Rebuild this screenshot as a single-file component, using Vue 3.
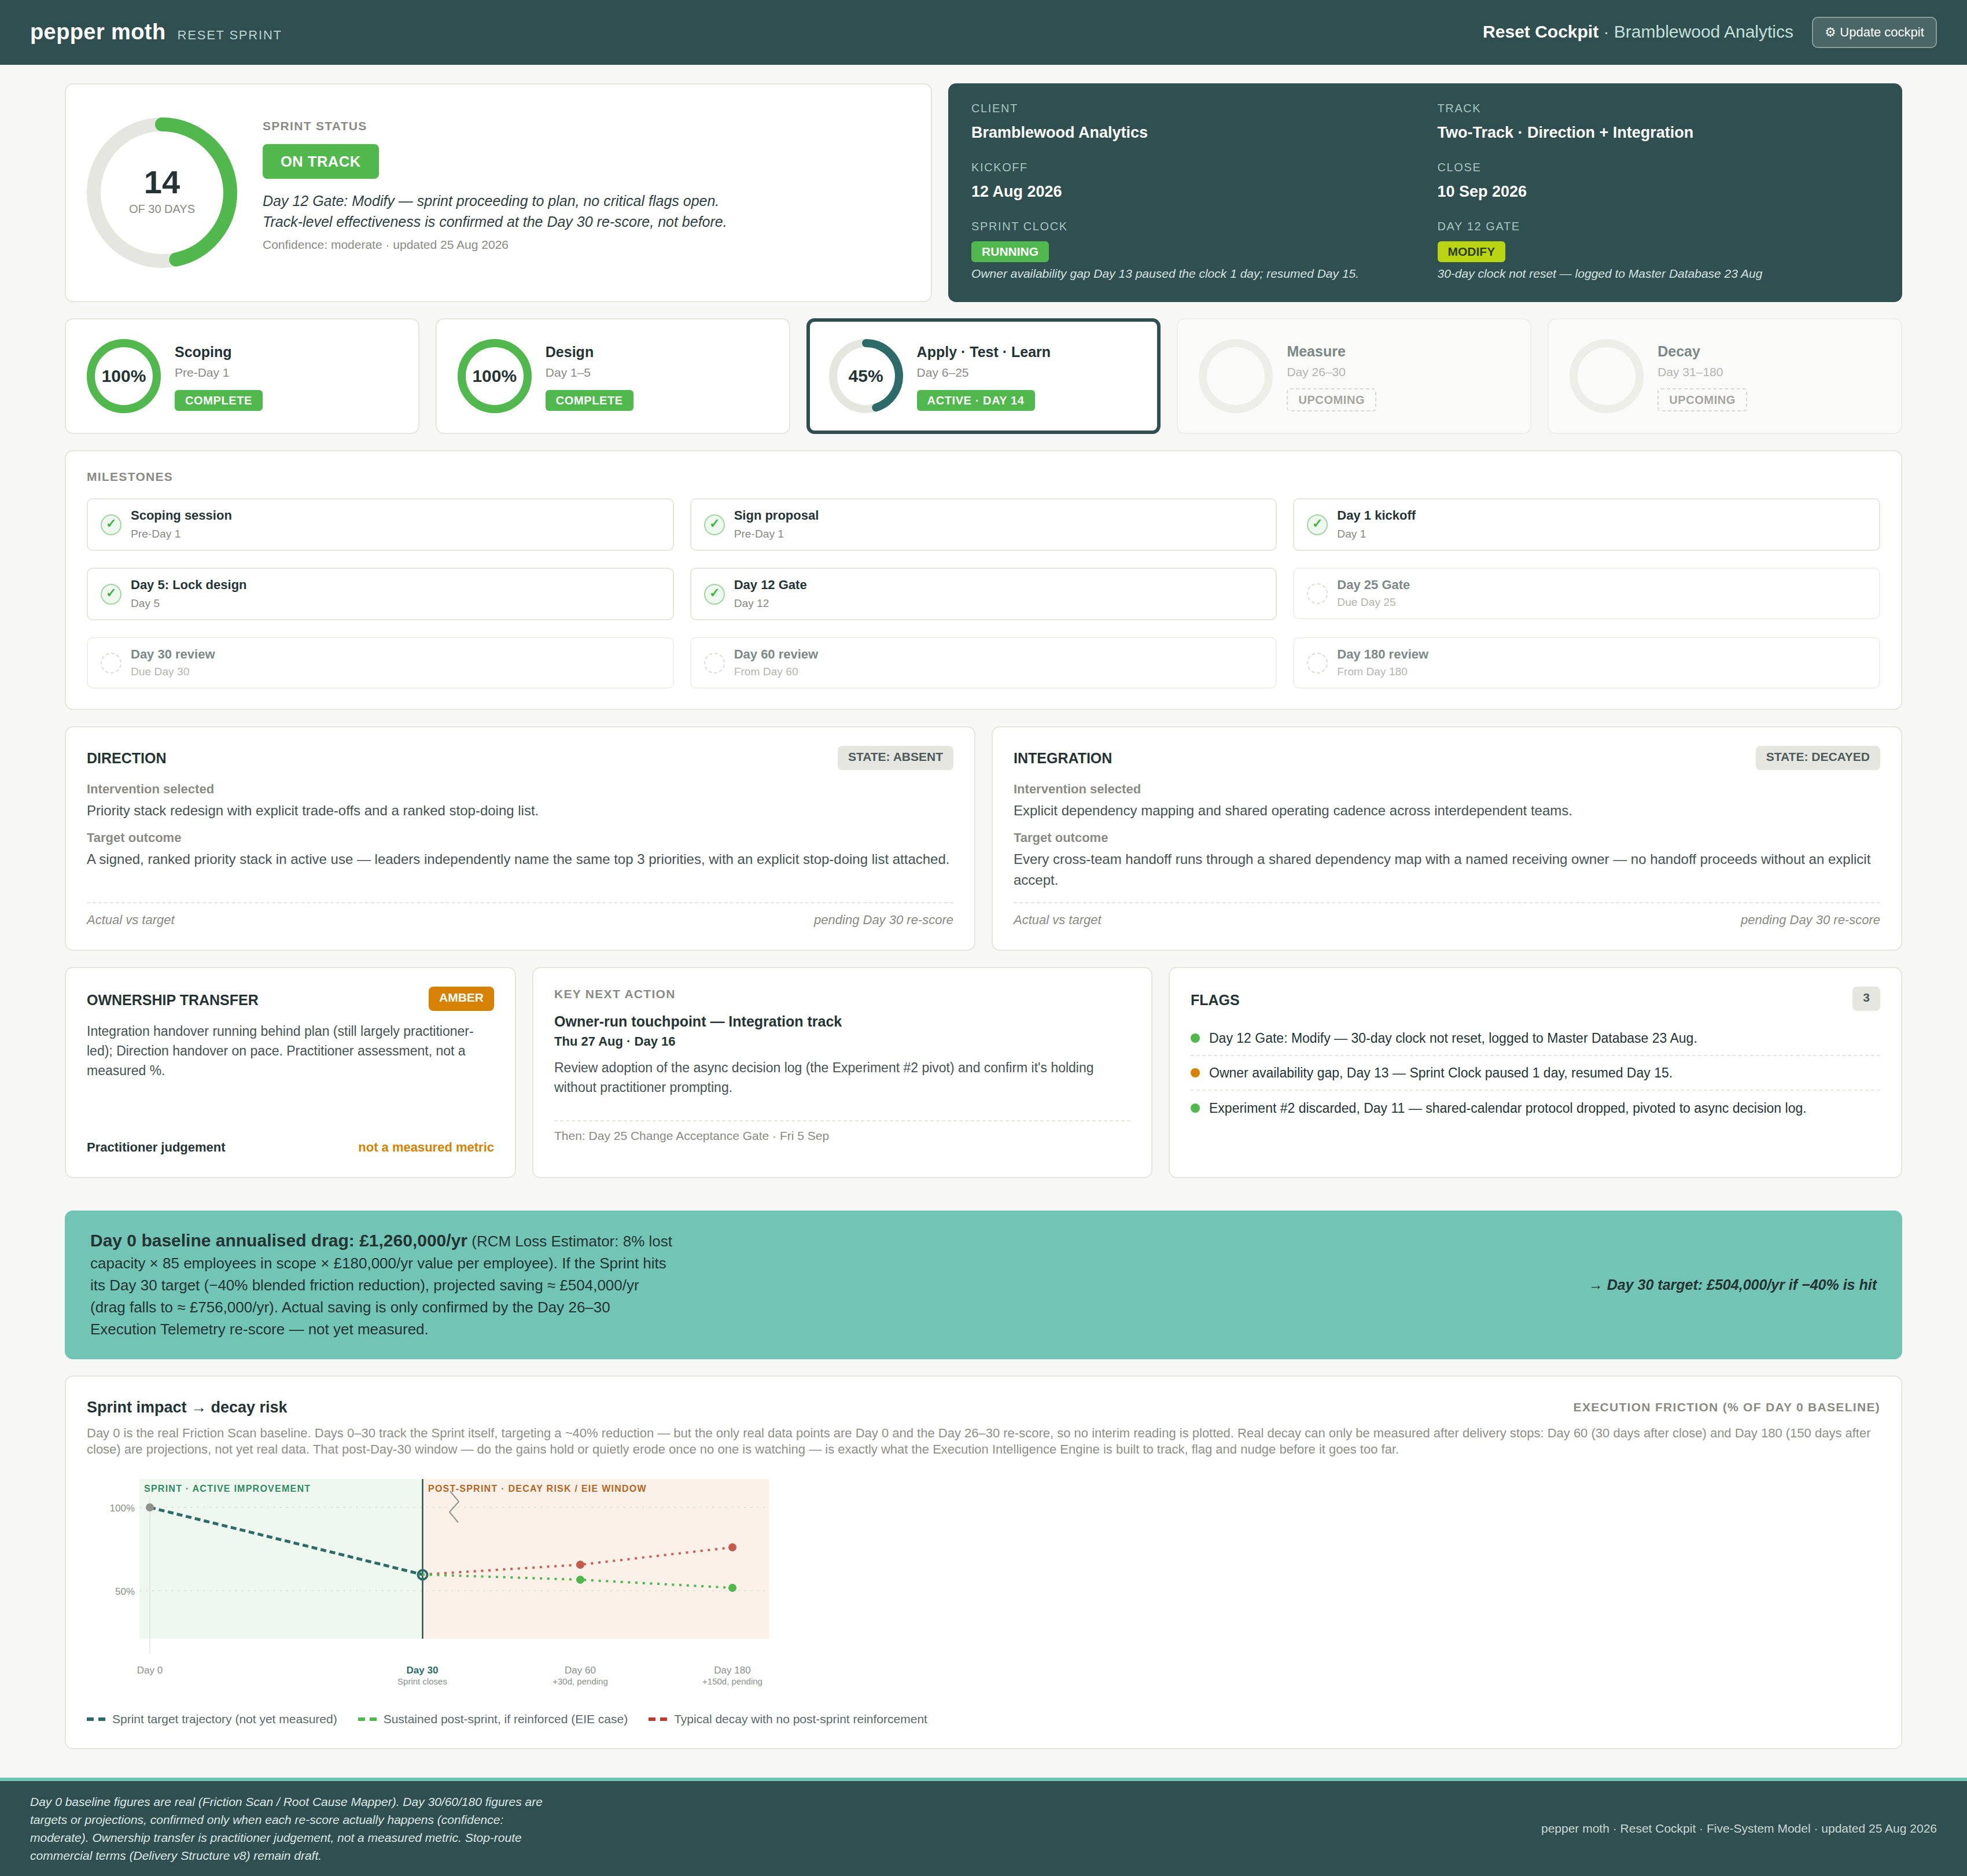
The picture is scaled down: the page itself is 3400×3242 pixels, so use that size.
<script setup>
const stages = [
  { name: "Scoping", sub: "Pre-Day 1", pct: 100, badge: "COMPLETE", state: "done" },
  { name: "Design", sub: "Day 1–5", pct: 100, badge: "COMPLETE", state: "done" },
  { name: "Apply · Test · Learn", sub: "Day 6–25", pct: 45, badge: "ACTIVE · DAY 14", state: "active" },
  { name: "Measure", sub: "Day 26–30", pct: 0, badge: "UPCOMING", state: "upcoming" },
  { name: "Decay", sub: "Day 31–180", pct: 0, badge: "UPCOMING", state: "upcoming" },
];

const milestones = [
  { name: "Scoping session", sub: "Pre-Day 1", done: true },
  { name: "Sign proposal", sub: "Pre-Day 1", done: true },
  { name: "Day 1 kickoff", sub: "Day 1", done: true },
  { name: "Day 5: Lock design", sub: "Day 5", done: true },
  { name: "Day 12 Gate", sub: "Day 12", done: true },
  { name: "Day 25 Gate", sub: "Due Day 25", done: false },
  { name: "Day 30 review", sub: "Due Day 30", done: false },
  { name: "Day 60 review", sub: "From Day 60", done: false },
  { name: "Day 180 review", sub: "From Day 180", done: false },
];

const tracks = [
  {
    name: "DIRECTION",
    state: "STATE: ABSENT",
    intervention: "Priority stack redesign with explicit trade-offs and a ranked stop-doing list.",
    outcome: "A signed, ranked priority stack in active use — leaders independently name the same top 3 priorities, with an explicit stop-doing list attached.",
  },
  {
    name: "INTEGRATION",
    state: "STATE: DECAYED",
    intervention: "Explicit dependency mapping and shared operating cadence across interdependent teams.",
    outcome: "Every cross-team handoff runs through a shared dependency map with a named receiving owner — no handoff proceeds without an explicit accept.",
  },
];

const flags = [
  { text: "Day 12 Gate: Modify — 30-day clock not reset, logged to Master Database 23 Aug.", color: "green" },
  { text: "Owner availability gap, Day 13 — Sprint Clock paused 1 day, resumed Day 15.", color: "amber" },
  { text: "Experiment #2 discarded, Day 11 — shared-calendar protocol dropped, pivoted to async decision log.", color: "green" },
];

const legend = [
  { label: "Sprint target trajectory (not yet measured)", color: "teal" },
  { label: "Sustained post-sprint, if reinforced (EIE case)", color: "green" },
  { label: "Typical decay with no post-sprint reinforcement", color: "red" },
];

const bigCirc = 2 * Math.PI * 118;
const smallCirc = 2 * Math.PI * 57;
const dash = (pct) => `${(pct / 100) * smallCirc} ${smallCirc}`;
</script>

<template>
  <div class="page">
    <header class="topbar">
      <div class="brand">
        <span class="logo">pepper moth</span>
        <span class="product">RESET SPRINT</span>
      </div>
      <div class="top-right">
        <div class="top-title"><b>Reset Cockpit</b> <i>·</i> <span>Bramblewood Analytics</span></div>
        <button class="update-btn">⚙ Update cockpit</button>
      </div>
    </header>

    <main class="content">
      <section class="hero">
        <div class="card status-card">
          <div class="big-ring">
            <svg width="260" height="260" viewBox="0 0 260 260">
              <circle cx="130" cy="130" r="118" fill="none" stroke="#e6e6e1" stroke-width="24" />
              <circle cx="130" cy="130" r="118" fill="none" stroke="#50b84c" stroke-width="24" stroke-linecap="round"
                :stroke-dasharray="`${(14 / 30) * bigCirc} ${bigCirc}`" transform="rotate(-90 130 130)" />
            </svg>
            <div class="big-ring-label">
              <div class="big-num">14</div>
              <div class="big-sub">OF 30 DAYS</div>
            </div>
          </div>
          <div class="status-body">
            <div class="eyebrow">SPRINT STATUS</div>
            <div class="on-track">ON TRACK</div>
            <p class="status-text">Day 12 Gate: Modify — sprint proceeding to plan, no critical flags open.<br>Track-level effectiveness is confirmed at the Day 30 re-score, not before.</p>
            <div class="status-meta">Confidence: moderate · updated 25 Aug 2026</div>
          </div>
        </div>

        <div class="info-panel">
          <div class="info-cell">
            <div class="info-label">CLIENT</div>
            <div class="info-value">Bramblewood Analytics</div>
          </div>
          <div class="info-cell">
            <div class="info-label">TRACK</div>
            <div class="info-value">Two-Track · Direction + Integration</div>
          </div>
          <div class="info-cell">
            <div class="info-label">KICKOFF</div>
            <div class="info-value">12 Aug 2026</div>
          </div>
          <div class="info-cell">
            <div class="info-label">CLOSE</div>
            <div class="info-value">10 Sep 2026</div>
          </div>
          <div class="info-cell">
            <div class="info-label">SPRINT CLOCK</div>
            <span class="info-pill running">RUNNING</span>
            <div class="info-note">Owner availability gap Day 13 paused the clock 1 day; resumed Day 15.</div>
          </div>
          <div class="info-cell">
            <div class="info-label">DAY 12 GATE</div>
            <span class="info-pill modify">MODIFY</span>
            <div class="info-note">30-day clock not reset — logged to Master Database 23 Aug</div>
          </div>
        </div>
      </section>

      <section class="stages">
        <div v-for="s in stages" :key="s.name" class="stage" :class="s.state">
          <div class="stage-ring">
            <svg width="128" height="128" viewBox="0 0 128 128">
              <circle cx="64" cy="64" r="57" fill="none" stroke="#e6e6e1" stroke-width="14" />
              <circle v-if="s.pct > 0" cx="64" cy="64" r="57" fill="none" :stroke="s.state === 'active' ? '#2d6b68' : '#50b84c'"
                stroke-width="14" stroke-linecap="round" :stroke-dasharray="dash(s.pct)" transform="rotate(-90 64 64)" />
            </svg>
            <span v-if="s.pct > 0" class="stage-pct">{{ s.pct }}%</span>
          </div>
          <div class="stage-body">
            <div class="stage-name">{{ s.name }}</div>
            <div class="stage-sub">{{ s.sub }}</div>
            <span class="stage-badge">{{ s.badge }}</span>
          </div>
        </div>
      </section>

      <section class="card milestones">
        <div class="eyebrow">MILESTONES</div>
        <div class="ms-grid">
          <div v-for="m in milestones" :key="m.name" class="ms" :class="{ todo: !m.done }">
            <span class="ms-icon"><template v-if="m.done">✓</template></span>
            <div>
              <div class="ms-name">{{ m.name }}</div>
              <div class="ms-sub">{{ m.sub }}</div>
            </div>
          </div>
        </div>
      </section>

      <section class="tracks">
        <div v-for="t in tracks" :key="t.name" class="card track">
          <div class="card-head">
            <h3>{{ t.name }}</h3>
            <span class="grey-pill">{{ t.state }}</span>
          </div>
          <div class="field-label">Intervention selected</div>
          <p class="field-text">{{ t.intervention }}</p>
          <div class="field-label second">Target outcome</div>
          <p class="field-text outcome">{{ t.outcome }}</p>
          <div class="track-foot">
            <span>Actual vs target</span>
            <span>pending Day 30 re-score</span>
          </div>
        </div>
      </section>

      <section class="lower">
        <div class="card owner">
          <div class="card-head">
            <h3>OWNERSHIP TRANSFER</h3>
            <span class="amber-pill">AMBER</span>
          </div>
          <p class="body-text">Integration handover running behind plan (still largely practitioner-led); Direction handover on pace. Practitioner assessment, not a measured %.</p>
          <div class="owner-foot">
            <b>Practitioner judgement</b>
            <b class="amber-text">not a measured metric</b>
          </div>
        </div>

        <div class="card next">
          <div class="eyebrow">KEY NEXT ACTION</div>
          <div class="next-title">Owner-run touchpoint — Integration track</div>
          <div class="next-date">Thu 27 Aug · Day 16</div>
          <p class="body-text">Review adoption of the async decision log (the Experiment #2 pivot) and confirm it's holding without practitioner prompting.</p>
          <div class="next-then">Then: Day 25 Change Acceptance Gate · Fri 5 Sep</div>
        </div>

        <div class="card flags">
          <div class="card-head">
            <h3>FLAGS</h3>
            <span class="grey-pill count">3</span>
          </div>
          <div v-for="f in flags" :key="f.text" class="flag">
            <span class="flag-dot" :class="f.color"></span>
            <span>{{ f.text }}</span>
          </div>
        </div>
      </section>

      <section class="banner">
        <p class="banner-text"><b>Day 0 baseline annualised drag: £1,260,000/yr</b> (RCM Loss Estimator: 8% lost capacity × 85 employees in scope × £180,000/yr value per employee). If the Sprint hits its Day 30 target (−40% blended friction reduction), projected saving ≈ £504,000/yr (drag falls to ≈ £756,000/yr). Actual saving is only confirmed by the Day 26–30 Execution Telemetry re-score — not yet measured.</p>
        <div class="banner-target">→ Day 30 target: £504,000/yr if −40% is hit</div>
      </section>

      <section class="card impact">
        <div class="impact-head">
          <h3>Sprint impact → decay risk</h3>
          <span class="eyebrow">EXECUTION FRICTION (% OF DAY 0 BASELINE)</span>
        </div>
        <p class="impact-desc">Day 0 is the real Friction Scan baseline. Days 0–30 track the Sprint itself, targeting a ~40% reduction — but the only real data points are Day 0 and the Day 26–30 re-score, so no interim reading is plotted. Real decay can only be measured after delivery stops: Day 60 (30 days after close) and Day 180 (150 days after close) are projections, not yet real data. That post-Day-30 window — do the gains hold or quietly erode once no one is watching — is exactly what the Execution Intelligence Engine is built to track, flag and nudge before it goes too far.</p>

        <svg class="chart" width="1200" height="386" viewBox="0 0 1200 386">
          <rect x="91" y="16" width="489" height="276" fill="#eef8ef" />
          <rect x="580" y="16" width="599" height="276" fill="#fbf1e8" />
          <line x1="91" y1="65" x2="1179" y2="65" stroke="#e4e4de" stroke-width="2" stroke-dasharray="4 7" />
          <line x1="91" y1="209" x2="1179" y2="209" stroke="#e4e4de" stroke-width="2" stroke-dasharray="4 7" />
          <line x1="109" y1="46" x2="109" y2="318" stroke="#d8dad5" stroke-width="1" />
          <line x1="580.5" y1="16" x2="580.5" y2="292" stroke="#2f4f50" stroke-width="2.5" />

          <text x="99" y="38" class="zone zone-a">SPRINT · ACTIVE IMPROVEMENT</text>
          <text x="590" y="38" class="zone zone-b">POST-SPRINT · DECAY RISK / EIE WINDOW</text>
          <polyline points="628,37 643,55 627,73 642,91" fill="none" stroke="#8e958f" stroke-width="2" />

          <text x="83" y="72" class="axis" text-anchor="end">100%</text>
          <text x="83" y="216" class="axis" text-anchor="end">50%</text>

          <line x1="109" y1="65" x2="580" y2="181" stroke="#2d6b68" stroke-width="5" stroke-dasharray="10 6" />
          <polyline points="580,181 853,164 1116,134" fill="none" stroke="#c0392b" stroke-opacity=".8" stroke-width="4" stroke-dasharray="4 8.7" />
          <polyline points="580,181 853,190 1116,204" fill="none" stroke="#50b84c" stroke-width="4" stroke-dasharray="4 8.7" />

          <circle cx="109" cy="65" r="7" fill="#8e918c" />
          <circle cx="580.5" cy="181.5" r="8" fill="none" stroke="#2d6b68" stroke-width="4" />
          <circle cx="853" cy="164" r="7" fill="#c85a4c" />
          <circle cx="853" cy="190" r="7" fill="#50b84c" />
          <circle cx="1116" cy="134" r="7" fill="#c85a4c" />
          <circle cx="1116" cy="204" r="7" fill="#50b84c" />

          <text x="109" y="352" class="axis" text-anchor="middle">Day 0</text>
          <text x="580" y="352" class="axis strong" text-anchor="middle">Day 30</text>
          <text x="580" y="371" class="axis small" text-anchor="middle">Sprint closes</text>
          <text x="853" y="352" class="axis" text-anchor="middle">Day 60</text>
          <text x="853" y="371" class="axis small" text-anchor="middle">+30d, pending</text>
          <text x="1116" y="352" class="axis" text-anchor="middle">Day 180</text>
          <text x="1116" y="371" class="axis small" text-anchor="middle">+150d, pending</text>
        </svg>

        <div class="legend">
          <div v-for="l in legend" :key="l.label" class="legend-item">
            <span class="swatch" :class="l.color"></span>
            <span>{{ l.label }}</span>
          </div>
        </div>
      </section>
    </main>

    <footer class="footer">
      <p class="foot-note">Day 0 baseline figures are real (Friction Scan / Root Cause Mapper). Day 30/60/180 figures are targets or projections, confirmed only when each re-score actually happens (confidence: moderate). Ownership transfer is practitioner judgement, not a measured metric. Stop-route commercial terms (Delivery Structure v8) remain draft.</p>
      <div class="foot-right">pepper moth · Reset Cockpit · Five-System Model · updated 25 Aug 2026</div>
    </footer>
  </div>
</template>

<style>
body {
  background: #f7f7f5;
}
</style>

<style scoped>
.page {
  font-family: "Liberation Sans", Arial, sans-serif;
  color: #243434;
  background: #f7f7f5;
  min-height: 3242px;
  display: flex;
  flex-direction: column;
}
.page * {
  box-sizing: border-box;
}
p, h3 {
  margin: 0;
}

/* top bar */
.topbar {
  height: 112px;
  background: #2f4f50;
  color: #fff;
  display: flex;
  align-items: center;
  justify-content: space-between;
  padding: 0 52px;
  flex-shrink: 0;
}
.brand {
  display: flex;
  align-items: baseline;
  gap: 20px;
  margin-bottom: 2px;
}
.logo {
  font-size: 38px;
  font-weight: 700;
  letter-spacing: .4px;
}
.product {
  font-size: 22px;
  letter-spacing: 1.8px;
  color: #b9d3cf;
}
.top-right {
  display: flex;
  align-items: center;
  gap: 32px;
}
.top-title {
  font-size: 30px;
  color: #c4e0db;
  margin-bottom: 2px;
}
.top-title b {
  color: #fff;
}
.top-title i {
  font-style: normal;
}
.update-btn {
  height: 54px;
  width: 216px;
  border: 2px solid #8a9d9d;
  border-radius: 10px;
  background: #4a6667;
  color: #fff;
  font-family: inherit;
  font-size: 22px;
  padding: 0;
}

/* main column */
.content {
  padding: 32px 112px 48px;
  display: flex;
  flex-direction: column;
  gap: 28px;
}
.card {
  background: #fff;
  border: 2px solid #e6e6e1;
  border-radius: 14px;
}
.eyebrow {
  font-size: 21px;
  line-height: 26px;
  font-weight: 700;
  letter-spacing: 1.3px;
  color: #8a8a84;
}

/* hero */
.hero {
  display: grid;
  grid-template-columns: 1fr 1.1fr;
  gap: 28px;
  height: 378px;
}
.status-card {
  display: flex;
  align-items: center;
  gap: 44px;
  padding: 0 36px;
}
.big-ring {
  position: relative;
  width: 260px;
  height: 260px;
  flex-shrink: 0;
}
.big-ring-label {
  position: absolute;
  inset: 0 0 10px;
  display: flex;
  flex-direction: column;
  align-items: center;
  justify-content: center;
}
.big-num {
  font-size: 56px;
  font-weight: 700;
  line-height: 64px;
  color: #243434;
}
.big-sub {
  font-size: 20px;
  color: #8a8a84;
  line-height: 24px;
  margin-top: 2px;
}
.status-body {
  padding-bottom: 22px;
}
.on-track {
  display: inline-block;
  margin: 18px 0 20px;
  height: 60px;
  line-height: 60px;
  padding: 0 31px;
  background: #50b84c;
  color: #fff;
  font-size: 25.5px;
  font-weight: 700;
  letter-spacing: .5px;
  border-radius: 8px;
}
.status-text {
  font-size: 25px;
  line-height: 36px;
  font-style: italic;
  color: #2f4040;
}
.status-meta {
  margin-top: 6px;
  font-size: 21px;
  line-height: 32px;
  color: #8a8a84;
}

/* info panel */
.info-panel {
  background: #2f4f50;
  border-radius: 14px;
  padding: 30px 40px;
  display: grid;
  grid-template-columns: 1fr 1fr;
  column-gap: 42px;
  align-content: start;
  row-gap: 29px;
  color: #fff;
}
.info-label {
  font-size: 20px;
  line-height: 26px;
  letter-spacing: 1.6px;
  color: #a7c6c2;
}
.info-value {
  margin-top: 11px;
  font-size: 27px;
  line-height: 36px;
  font-weight: 700;
}
.info-pill {
  display: inline-block;
  margin-top: 13px;
  height: 36px;
  line-height: 36px;
  padding: 0 18px;
  border-radius: 6px;
  font-size: 21px;
  font-weight: 700;
}
.info-pill.running {
  background: #50b84c;
  color: #fff;
}
.info-pill.modify {
  background: #b9d512;
  color: #2f3d10;
}
.info-note {
  margin-top: 5px;
  font-size: 21px;
  line-height: 30px;
  font-style: italic;
  color: #d5e3e1;
}

/* stage cards */
.stages {
  display: grid;
  grid-template-columns: repeat(5, 1fr);
  gap: 28px;
}
.stage {
  height: 200px;
  background: #fff;
  border: 2px solid #e6e6e1;
  border-radius: 14px;
  display: flex;
  align-items: center;
  gap: 24px;
  padding: 0 36px;
}
.stage.active {
  border: 6px solid #2f4f50;
  padding: 0 33px;
}
.stage.upcoming {
  background: #fafaf9;
  border-color: #eeeeea;
}
.stage-ring {
  position: relative;
  width: 128px;
  height: 128px;
  flex-shrink: 0;
}
.stage.upcoming .stage-ring {
  opacity: .6;
}
.stage-pct {
  position: absolute;
  inset: 0;
  display: flex;
  align-items: center;
  justify-content: center;
  font-size: 30px;
  font-weight: 700;
}
.stage-name {
  font-size: 25px;
  line-height: 34px;
  font-weight: 700;
}
.stage-sub {
  margin-top: 4px;
  font-size: 21px;
  line-height: 30px;
  color: #8a8a84;
}
.stage-badge {
  display: inline-block;
  margin-top: 15px;
  height: 36px;
  line-height: 36px;
  padding: 0 18px;
  background: #50b84c;
  color: #fff;
  font-size: 20px;
  font-weight: 700;
  letter-spacing: .6px;
  border-radius: 6px;
}
.stage.upcoming .stage-name {
  color: #7d8887;
}
.stage.upcoming .stage-sub {
  color: #b5b5b0;
}
.stage.upcoming .stage-badge {
  background: none;
  height: 40px;
  line-height: 36px;
  margin: 13px 0 0;
  border: 2px dashed #d9d9d4;
  color: #a5a5a0;
}

/* milestones */
.milestones {
  padding: 31px 36px 35px;
}
.ms-grid {
  margin-top: 24px;
  display: grid;
  grid-template-columns: repeat(3, 1fr);
  gap: 29px 28px;
}
.ms {
  height: 91px;
  border: 2px solid #e6e6e1;
  border-radius: 10px;
  display: flex;
  align-items: center;
  gap: 16px;
  padding: 0 22px;
}
.ms-icon {
  width: 36px;
  height: 36px;
  flex-shrink: 0;
  border-radius: 50%;
  border: 2px solid #a0d6a0;
  background: #eef8ef;
  color: #3bb53b;
  font-size: 22px;
  font-weight: 700;
  line-height: 28px;
  text-align: center;
}
.ms-name {
  font-size: 22px;
  line-height: 30px;
  font-weight: 700;
}
.ms-sub {
  margin-top: 3px;
  font-size: 19.2px;
  line-height: 28px;
  color: #8a8a84;
}
.ms.todo {
  height: 89px;
  border-color: #efefeb;
}
.ms.todo .ms-icon {
  background: none;
  border: 2px dashed #dcdcd8;
}
.ms.todo .ms-name {
  color: #7d8887;
}
.ms.todo .ms-sub {
  margin-top: 1px;
  color: #b5b5b0;
}

/* tracks */
.tracks {
  display: grid;
  grid-template-columns: 1fr 1fr;
  gap: 28px;
}
.track {
  height: 388px;
  padding: 32px 36px 0;
  display: flex;
  flex-direction: column;
}
.card-head {
  display: flex;
  justify-content: space-between;
  align-items: flex-start;
}
.card-head h3 {
  font-size: 25px;
  line-height: 42px;
  padding-top: 2px;
  color: #243434;
}
.track .card-head h3 {
  padding-top: 0;
}
.grey-pill {
  height: 42px;
  line-height: 38px;
  padding: 0 18px;
  background: #e6e6e1;
  color: #4d5a5a;
  font-size: 21px;
  font-weight: 700;
  border-radius: 8px;
}
.field-label {
  margin-top: 18px;
  font-size: 22px;
  line-height: 30px;
  font-weight: 700;
  color: #8a8a84;
}
.field-label.second {
  margin-top: 14px;
}
.field-text {
  margin-top: 4px;
  font-size: 24px;
  line-height: 36px;
  color: #465252;
}
.track-foot {
  margin-top: auto;
  margin-bottom: 38px;
  border-top: 2px dashed #e6e6e1;
  padding-top: 16px;
  display: flex;
  justify-content: space-between;
  font-size: 22px;
  font-style: italic;
  color: #8a8a84;
}

/* lower row */
.lower {
  display: grid;
  grid-template-columns: 780fr 1072fr 1268fr;
  gap: 28px;
  height: 365px;
}
.owner,
.next,
.flags {
  padding: 32px 36px 0;
  display: flex;
  flex-direction: column;
}
.amber-pill {
  height: 42px;
  line-height: 38px;
  padding: 0 18px;
  background: #d68100;
  color: #fff;
  font-size: 21px;
  font-weight: 700;
  border-radius: 8px;
}
.body-text {
  font-size: 23px;
  line-height: 34px;
  color: #465252;
}
.owner .body-text {
  margin-top: 16px;
}
.owner-foot {
  margin-top: auto;
  margin-bottom: 38px;
  display: flex;
  justify-content: space-between;
  font-size: 22px;
}
.amber-text {
  color: #d68100;
}
.next-title {
  margin-top: 16px;
  font-size: 25px;
  line-height: 36px;
  font-weight: 700;
}
.next-date {
  margin-top: 1px;
  font-size: 22px;
  line-height: 32px;
  font-weight: 700;
}
.next .body-text {
  margin-top: 12px;
}
.next-then {
  margin-top: 40px;
  border-top: 2px dashed #e6e6e1;
  padding-top: 10px;
  font-size: 21px;
  line-height: 30px;
  color: #8a8a84;
}
.flags .card-head {
  margin-bottom: 16px;
}
.flag {
  display: flex;
  align-items: center;
  gap: 16px;
  height: 60px;
  font-size: 23px;
  color: #243434;
  border-bottom: 2px dashed #e6e6e1;
}
.flag:last-child {
  border-bottom: none;
}
.flag-dot {
  width: 16px;
  height: 16px;
  border-radius: 50%;
  flex-shrink: 0;
}
.flag-dot.green {
  background: #50b84c;
}
.flag-dot.amber {
  background: #d68100;
}

/* banner */
.banner {
  margin-top: 28px;
  height: 257px;
  flex-shrink: 0;
  background: #72c4b4;
  border-radius: 14px;
  padding: 0 44px;
  display: flex;
  align-items: center;
  justify-content: space-between;
}
.banner-text {
  width: 1012px;
  font-size: 26px;
  line-height: 38px;
  color: #243434;
}
.banner-text b {
  font-size: 30px;
}
.banner-target {
  font-size: 25px;
  font-weight: 700;
  font-style: italic;
  color: #243434;
}

/* impact */
.impact {
  padding: 34px 36px 0;
  height: 646px;
}
.impact-head {
  display: flex;
  justify-content: space-between;
  align-items: center;
}
.impact-head h3 {
  font-size: 27px;
  line-height: 38px;
}
.impact-desc {
  margin-top: 12px;
  font-size: 22px;
  line-height: 28px;
  color: #8f8f89;
}
.chart {
  display: block;
  margin-top: 21px;
}
.zone {
  font-size: 16px;
  font-weight: 700;
  letter-spacing: 1.25px;
}
.zone-a {
  fill: #2e8b63;
}
.zone-b {
  fill: #b5651d;
}
.axis {
  font-size: 17px;
  fill: #8a8f8a;
}
.axis.strong {
  font-weight: 700;
  fill: #2d6b68;
}
.axis.small {
  font-size: 15px;
}
.legend {
  display: flex;
  gap: 36px;
  margin-top: 33px;
  font-size: 21px;
  color: #5b6868;
}
.legend-item {
  display: flex;
  align-items: center;
  gap: 12px;
}
.swatch {
  width: 32px;
  height: 6px;
}
.swatch.teal {
  background: repeating-linear-gradient(90deg, #2d6b68 0 12px, transparent 12px 20px);
}
.swatch.green {
  background: repeating-linear-gradient(90deg, #50b84c 0 12px, transparent 12px 20px);
}
.swatch.red {
  background: repeating-linear-gradient(90deg, #c0392b 0 12px, transparent 12px 20px);
}

/* footer */
.footer {
  margin-top: auto;
  height: 170px;
  background: #2f4f50;
  border-top: 6px solid #72c4b4;
  padding: 0 52px;
  display: flex;
  align-items: center;
  justify-content: space-between;
}
.foot-note {
  width: 900px;
  font-size: 21px;
  line-height: 31px;
  font-style: italic;
  color: #dce8e6;
}
.foot-right {
  font-size: 21px;
  color: #c9d8d5;
}
</style>
